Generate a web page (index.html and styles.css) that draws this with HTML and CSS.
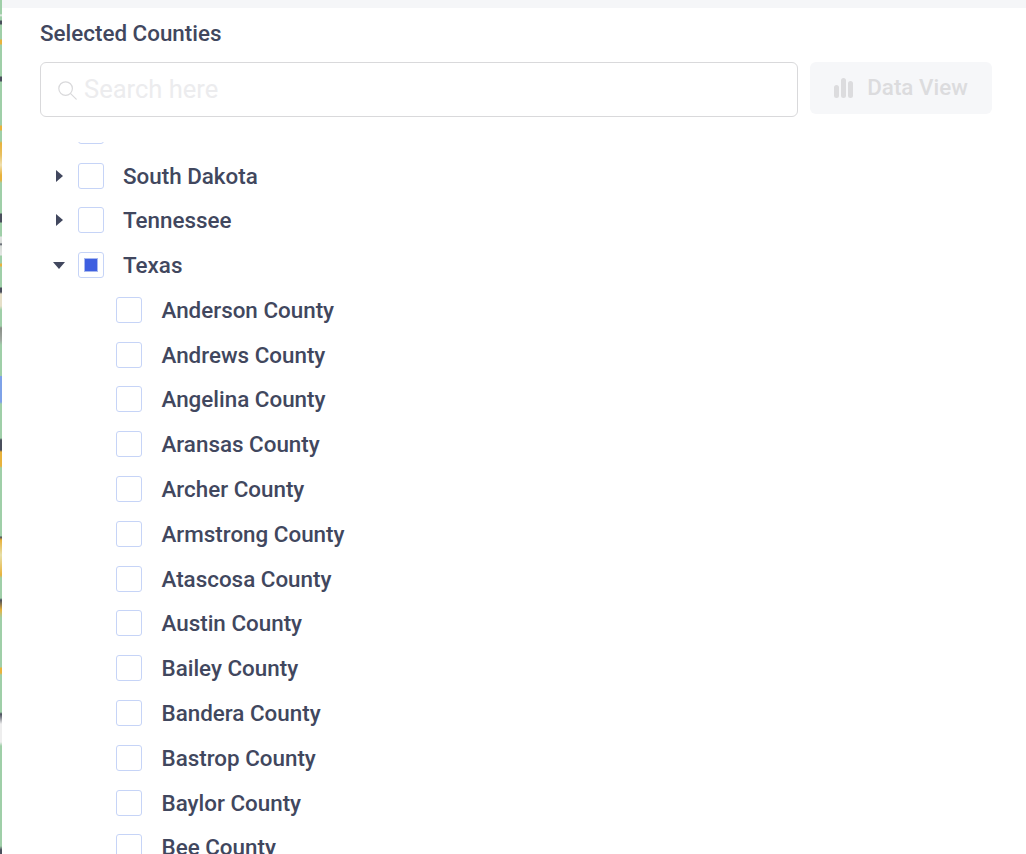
FILE: index.html
```html
<!DOCTYPE html>
<html lang="en">
<head>
<meta charset="utf-8">
<title>Selected Counties</title>
<link rel="stylesheet" href="styles.css">
</head>
<body>
<div class="page">
  <div class="map-edge"></div>
  <main class="panel">
    <div class="panel-top"></div>
    <div class="panel-body">
      <h2 class="title">Selected Counties</h2>
      <div class="toolbar">
        <label class="search">
          <svg class="search-icon" viewBox="0 0 20 20" width="20" height="20" fill="none" stroke="#d9d9db" stroke-width="1.2"><circle cx="8.6" cy="8.6" r="6.8"/><path d="M13.6 13.6 19.2 19.2" stroke-linecap="round"/></svg>
          <input class="search-input" type="text" placeholder="Search here">
        </label>
        <button class="data-view" type="button">
          <svg viewBox="0 0 20 20" width="20" height="20" fill="#dcdcde"><rect x="0" y="7" width="5" height="13" rx="2.5"/><rect x="7" y="0" width="5" height="20" rx="2.5"/><rect x="14" y="3" width="5" height="17" rx="2.5"/></svg>
          <span class="data-view-label">Data View</span>
        </button>
      </div>
      <div class="tree">
        <ul class="tree-list">
          <li class="row state"><span class="caret"></span><span class="box"></span></li>
          <li class="row state"><span class="caret right"></span><span class="box"></span><span class="label">South Dakota</span></li>
          <li class="row state"><span class="caret right"></span><span class="box"></span><span class="label">Tennessee</span></li>
          <li class="row state"><span class="caret down"></span><span class="box partial"></span><span class="label">Texas</span></li>
          <li class="row county"><span class="box"></span><span class="label">Anderson County</span></li>
          <li class="row county"><span class="box"></span><span class="label">Andrews County</span></li>
          <li class="row county"><span class="box"></span><span class="label">Angelina County</span></li>
          <li class="row county"><span class="box"></span><span class="label">Aransas County</span></li>
          <li class="row county"><span class="box"></span><span class="label">Archer County</span></li>
          <li class="row county"><span class="box"></span><span class="label">Armstrong County</span></li>
          <li class="row county"><span class="box"></span><span class="label">Atascosa County</span></li>
          <li class="row county"><span class="box"></span><span class="label">Austin County</span></li>
          <li class="row county"><span class="box"></span><span class="label">Bailey County</span></li>
          <li class="row county"><span class="box"></span><span class="label">Bandera County</span></li>
          <li class="row county"><span class="box"></span><span class="label">Bastrop County</span></li>
          <li class="row county"><span class="box"></span><span class="label">Baylor County</span></li>
          <li class="row county"><span class="box"></span><span class="label">Bee County</span></li>
        </ul>
      </div>
    </div>
  </main>
</div>
</body>
</html>
```
FILE: styles.css
```css
* { box-sizing: border-box; }
html, body { margin: 0; height: 100%; overflow: hidden; background: #fff; }
body { font-family: Roboto, "Noto Sans", sans-serif; color: #41475e; }
.page { display: flex; height: 854px; }
.map-edge {
  width: 2px;
  flex: none;
  background: linear-gradient(to bottom,
    #9fcfa8 0, #9fcfa8 14px, #f0f0f0 15px, #9fcfa8 17px, #9fcfa8 20px, #4a4f5c 21px, #4a4f5c 24px, #9fcfa8 25px,
    #9fcfa8 39px, #e8b23c 40px, #e8b23c 44px, #9fcfa8 45px, #9fcfa8 76px, #4a4f5c 77px, #4a4f5c 81px, #9fcfa8 82px,
    #9fcfa8 125px, #e8b23c 126px, #e8b23c 130px, #9fcfa8 131px, #9fcfa8 141px, #e8b23c 143px, #e8c060 155px, #efe0b0 165px, #e8b23c 175px, #e8b23c 180px, #9fcfa8 183px,
    #9fcfa8 213px, #4a4f5c 214px, #4a4f5c 222px, #9fcfa8 223px, #9fcfa8 236px, #e4e6e4 237px, #d8dcd8 243px, #4a4f5c 244px, #d8dcd8 246px, #e4e6e4 255px, #9fcfa8 256px,
    #9fcfa8 263px, #e8b23c 264px, #e8b23c 266px, #9fcfa8 267px, #9fcfa8 287px, #4a4f5c 288px, #4a4f5c 292px,
    #e6dfc8 294px, #e6dfc8 306px, #9fcfa8 310px, #9fcfa8 326px, #8a8f88 328px, #9fa8a0 340px,
    #9fcfa8 345px, #9fcfa8 376px, #7ea2e8 376px, #7ea2e8 402px, #9fcfa8 404px, #9fcfa8 438px,
    #4a4f5c 440px, #4a4f5c 450px, #e8b23c 452px, #e8b23c 466px, #9fcfa8 468px, #9fcfa8 536px,
    #4a4f5c 537px, #e8b23c 540px, #e6dfa8 555px, #e8b23c 575px, #9fcfa8 578px, #9fcfa8 598px,
    #4a4f5c 600px, #e8b23c 610px, #9fcfa8 618px, #9fcfa8 667px, #e8b23c 668px, #e8b23c 673px,
    #9fcfa8 675px, #9fcfa8 712px, #4a4f5c 714px, #eeeeee 724px, #eeeeee 742px, #9fcfa8 746px, #9fcfa8 846px, #4a4f5c 850px);
}
.panel { flex: 1; min-width: 0; display: flex; flex-direction: column; }
.panel-top { height: 8px; flex: none; background: #f5f6f8; }
.panel-body { flex: 1; min-height: 0; padding: 0 34px 0 38px; display: flex; flex-direction: column; }
.title { margin: 13px 0 0; font-size: 22.4px; line-height: 24px; font-weight: 500; color: #41475e; }
.toolbar { display: flex; gap: 12px; margin-top: 17px; align-items: flex-start; }
.search {
  flex: 1; height: 55px; display: flex; align-items: center; gap: 7px;
  padding: 0 16px; border: 1px solid #d9d9db; border-radius: 6px; background: #fff;
}
.search-icon { flex: none; }
.search-input {
  flex: 1; min-width: 0; height: 29px; border: 0; outline: 0; padding: 0; background: transparent;
  font: 400 25.5px/29px Roboto, "Noto Sans", sans-serif; color: #41475e;
  margin-bottom: 1px;
}
.search-input::placeholder { color: #ececee; opacity: 1; }
.data-view {
  width: 182px; height: 52px; flex: none; display: flex; align-items: center; justify-content: center; gap: 13px;
  border: 0; border-radius: 6px; background: #f6f7f9; color: #dcdcde;
  font: 500 22.4px/24px Roboto, "Noto Sans", sans-serif; padding: 0;
}
.data-view-label { margin-bottom: 2px; }
.tree { flex: 1; min-height: 0; overflow: hidden; margin-top: 25px; }
.tree-list { list-style: none; margin: -33.7px 0 0; padding: 0; }
.row { height: 44.8px; display: flex; align-items: center; font-size: 22.4px; font-weight: 500; color: #41475e; }
.state { padding-left: 12px; }
.county { padding-left: 76px; }
.county .label { margin-left: 0.5px; }
.caret { width: 14px; height: 14px; flex: none; margin-right: 12px; display: flex; align-items: center; justify-content: center; }
.caret.right::before { content: ""; border-left: 7px solid #41475e; border-top: 6px solid transparent; border-bottom: 6px solid transparent; }
.caret.down::before { content: ""; border-top: 7px solid #41475e; border-left: 6px solid transparent; border-right: 6px solid transparent; }
.box {
  width: 26px; height: 26px; flex: none; border: 1px solid #c6d4f7; border-radius: 3px; background: #fff;
  display: flex; align-items: center; justify-content: center; margin-right: 19px;
}
.box.partial::before { content: ""; width: 14px; height: 14px; background: #3e5fe0; outline: 1px solid #a8b8ef; outline-offset: -1px; }
```
